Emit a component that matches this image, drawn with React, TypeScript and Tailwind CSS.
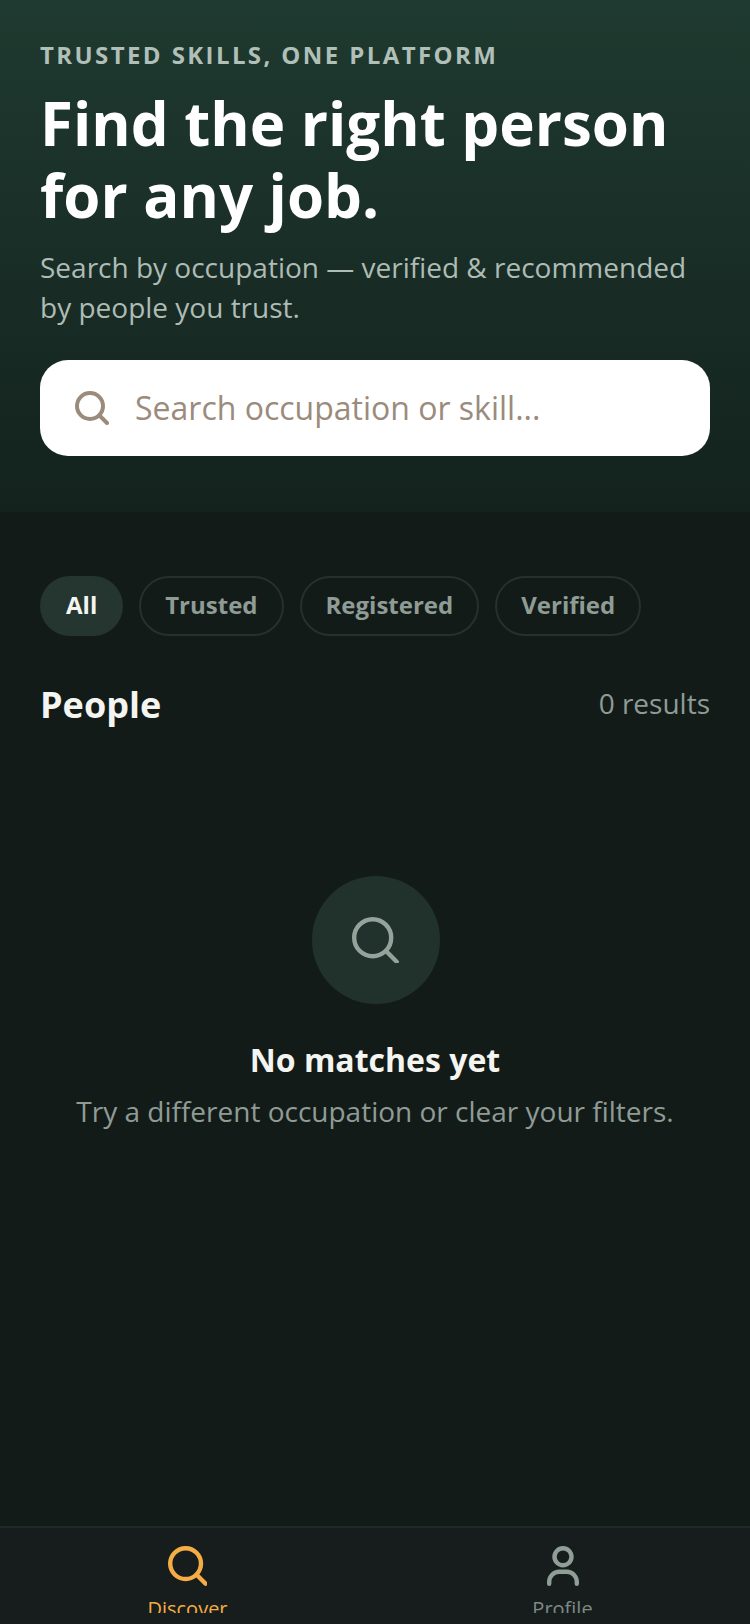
const filters = ['All', 'Trusted', 'Registered', 'Verified'];

function SearchGlyph({ r, end, sw, className }: { r: number; end: number; sw: number; className: string }) {
  const c = r + sw / 2;
  const size = c + end + sw / 2;
  const start = r * 0.72;
  return (
    <svg width={size} height={size} viewBox={`0 0 ${size} ${size}`} fill="none" stroke="currentColor" strokeWidth={sw} strokeLinecap="round" className={`shrink-0 ${className}`}>
      <circle cx={c} cy={c} r={r} />
      <line x1={c + start} y1={c + start} x2={c + end} y2={c + end} />
    </svg>
  );
}

function PersonGlyph() {
  return (
    <svg width="32" height="40" viewBox="0 0 32 40" fill="none" stroke="currentColor" strokeWidth="4.4" strokeLinecap="round" className="shrink-0">
      <circle cx="16" cy="10.7" r="8.5" />
      <path d="M2.2 37.8v-2a10 10 0 0 1 10-10h7.6a10 10 0 0 1 10 10v2" />
    </svg>
  );
}

export default function App() {
  return (
    <div className="flex h-[1624px] w-[750px] flex-col overflow-hidden bg-[#131b19] font-['Open_Sans',sans-serif]">
      <header className="h-[512px] shrink-0 bg-gradient-to-b from-[#1f3a30] to-[#13221d] px-10 pt-[39px]">
        <p className="text-[24px] leading-[32px] font-bold tracking-[2.4px] text-[#b0bfb8]">TRUSTED SKILLS, ONE PLATFORM</p>
        <h1 className="mt-[16px] text-[60px] leading-[72px] font-bold text-white">
          Find the right person
          <br />
          for any job.
        </h1>
        <p className="mt-[16px] text-[28px] leading-[40px] text-[#aebcb5]">
          Search by occupation — verified &amp; recommended
          <br />
          by people you trust.
        </p>
        <div className="mt-[33px] flex h-[96px] items-center gap-[26px] rounded-[28px] bg-white pl-[35px]">
          <SearchGlyph r={13} end={17} sw={4} className="text-[#9a8b7c]" />
          <span className="text-[32px] text-[#9a8b7c]">Search occupation or skill...</span>
        </div>
      </header>

      <main className="flex flex-1 flex-col px-10 pt-[64px]">
        <div className="flex gap-4">
          {filters.map((f, i) => (
            <div
              key={f}
              className={
                i === 0
                  ? 'flex h-[60px] items-center rounded-full bg-[#25352f] px-[26px] pb-[2px] text-[24px] font-bold text-[#f4f5f0]'
                  : 'flex h-[60px] items-center rounded-full border-2 border-[#27302d] px-[24px] pb-[2px] text-[24px] font-bold text-[#8f9b95]'
              }
            >
              {f}
            </div>
          ))}
        </div>

        <div className="mt-[41px] flex items-center justify-between">
          <h2 className="text-[36px] leading-[56px] font-bold text-[#f4f5f0]">People</h2>
          <span className="mb-[4px] text-[28px] text-[#8f9b95]">0 results</span>
        </div>

        <div className="mt-[143px] flex flex-col items-center">
          <div className="ml-px flex h-[128px] w-[128px] items-center justify-center rounded-full bg-[#21312c]">
            <SearchGlyph r={18.5} end={24} sw={4.4} className="text-[#94a39b]" />
          </div>
          <h3 className="mt-[32px] text-[32px] leading-[48px] font-bold text-[#f4f5f0]">No matches yet</h3>
          <p className="mt-[6px] text-[28px] leading-[42px] text-[#8f9b95]">Try a different occupation or clear your filters.</p>
        </div>
      </main>

      <nav className="h-[98px] shrink-0 border-t-2 border-[#212927] bg-[#171d1c]">
        {/* labels are cut off by the bottom of the tab row in the picture */}
        <div className="flex h-[85px] overflow-hidden">
          <div className="flex w-[375px] flex-col items-center pt-[18px] text-[#f5ac45]">
            <SearchGlyph r={15.4} end={20} sw={4.4} className="" />
            <span className="mt-[9px] text-[20px] leading-[28px]">Discover</span>
          </div>
          <div className="flex w-[375px] flex-col items-center pt-[18px] text-[#8f9e97]">
            <PersonGlyph />
            <span className="mt-[9px] text-[20px] leading-[28px] text-[#7d8a85]">Profile</span>
          </div>
        </div>
      </nav>
    </div>
  );
}
